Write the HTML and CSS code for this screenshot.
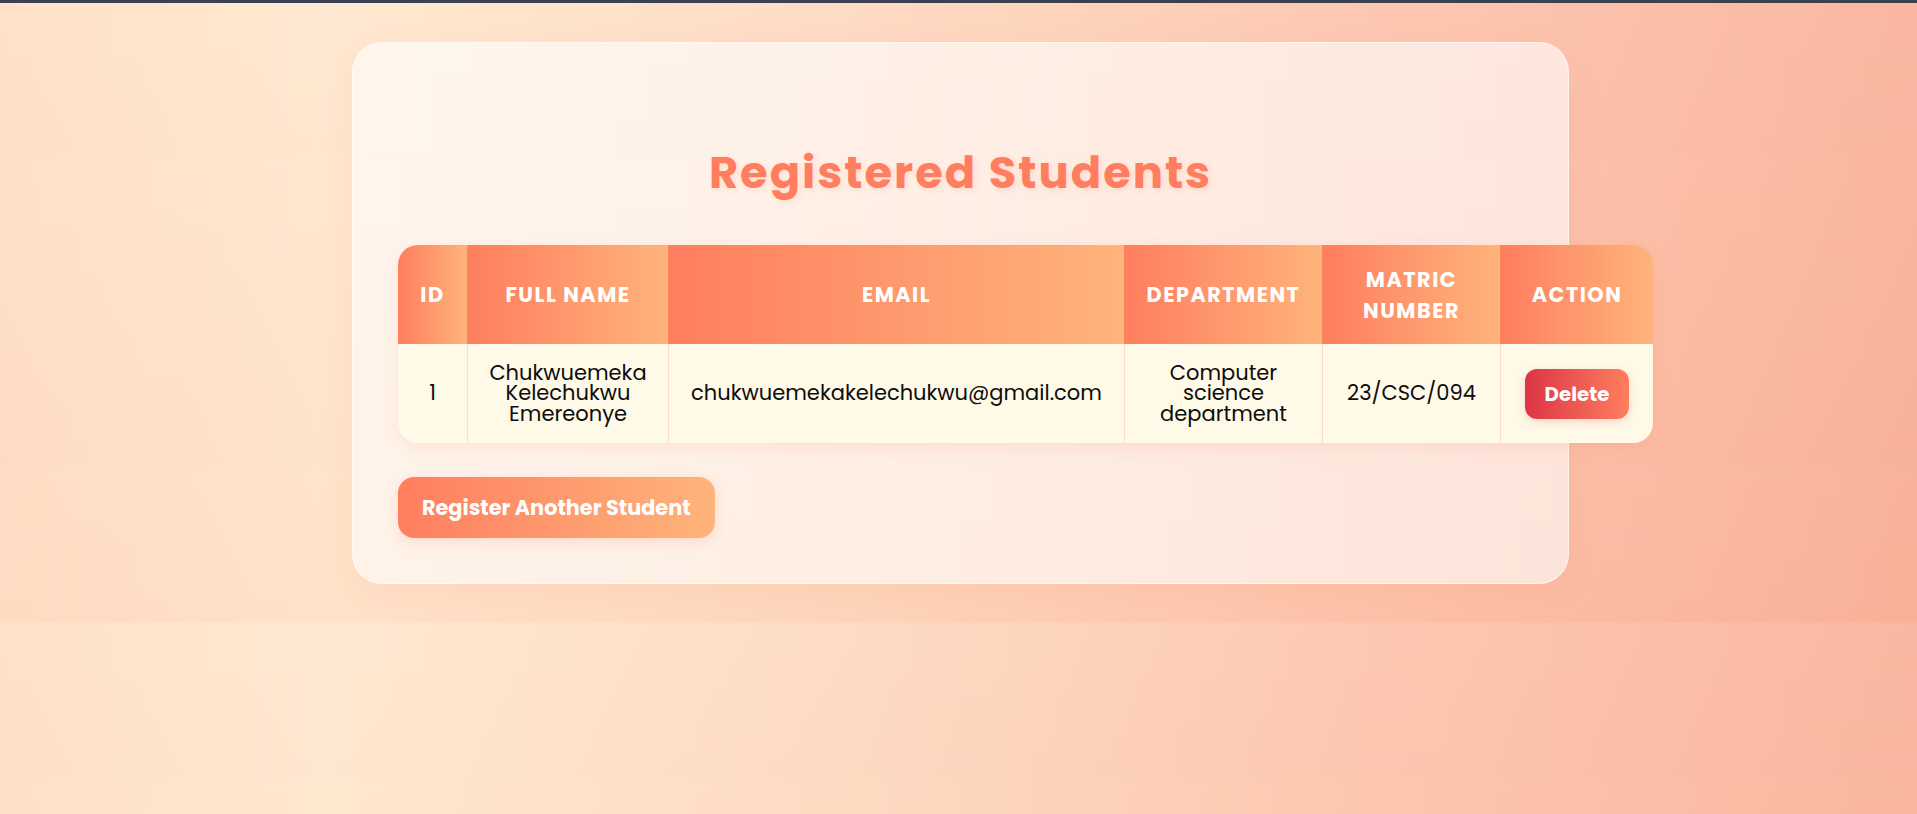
FILE: index.html
```html
<!DOCTYPE html>
<html lang="en">
<head>
<meta charset="utf-8">
<title>Registered Students</title>
<link rel="stylesheet" href="styles.css">
</head>
<body>
<div class="topbar"></div>
<main class="page">
  <section class="card">
    <h1 class="title">Registered Students</h1>
    <div class="table-wrap">
      <table class="students">
        <colgroup>
          <col class="c-id">
          <col class="c-name">
          <col class="c-email">
          <col class="c-dept">
          <col class="c-matric">
          <col class="c-action">
        </colgroup>
        <thead>
          <tr>
            <th>ID</th>
            <th>Full Name</th>
            <th>Email</th>
            <th>Department</th>
            <th>Matric Number</th>
            <th>Action</th>
          </tr>
        </thead>
        <tbody>
          <tr>
            <td>1</td>
            <td>Chukwuemeka Kelechukwu Emereonye</td>
            <td>chukwuemekakelechukwu@gmail.com</td>
            <td>Computer science department</td>
            <td>23/CSC/094</td>
            <td><button class="btn-delete" type="button">Delete</button></td>
          </tr>
        </tbody>
      </table>
    </div>
    <div class="actions">
      <a class="btn-register" href="#">Register Another Student</a>
    </div>
  </section>
</main>
</body>
</html>
```

FILE: styles.css
```css
html {
  background:
    linear-gradient(to bottom, rgba(255,255,255,0.06), rgba(235,130,90,0.05)),
    linear-gradient(90deg, #ffdfc7 0%, #ffe8cf 17%, #fed9c0 45%, #fdc6ae 70%, #fab39b 100%);
}

body {
  margin: 0;
  font-family: Poppins, "DejaVu Sans", sans-serif;
  color: #0d0d0d;
}

.topbar {
  height: 3px;
  background: #3b4150;
}

.page {
  padding: 39px 0 39px 4px;
}

.card {
  box-sizing: border-box;
  width: 1217px;
  margin: 0 auto;
  padding: 45px;
  border: 1px solid rgba(255, 255, 255, 0.55);
  border-radius: 30px;
  background: rgba(255, 255, 255, 0.6);
  box-shadow: 0 8px 32px rgba(255, 126, 95, 0.10);
}

.title {
  margin: 55px 0 42px;
  font-size: 44.8px;
  line-height: 60px;
  font-weight: 700;
  letter-spacing: 2px;
  text-align: center;
  color: #ff7e5f;
  text-shadow: 2px 2px 6px rgba(255, 126, 95, 0.18);
}

.table-wrap {
  width: 1255px;
  border-radius: 20px;
  overflow: hidden;
  box-shadow: 0 4px 16px rgba(255, 126, 95, 0.14);
}

.students {
  width: 1255px;
  table-layout: fixed;
  border-collapse: separate;
  border-spacing: 0;
}

.c-id { width: 70px; }
.c-name { width: 201px; }
.c-email { width: 456px; }
.c-dept { width: 198px; }
.c-matric { width: 178px; }
.c-action { width: 152px; }

.students thead tr,
.students tbody tr {
  height: 99px;
}

.students th {
  padding: 0 8px;
  background: linear-gradient(90deg, #ff7e5f, #feb47b);
  color: #fff;
  font-size: 20.8px;
  line-height: 31px;
  font-weight: 700;
  letter-spacing: 1.5px;
  text-transform: uppercase;
  text-align: center;
  vertical-align: middle;
  border-right: 1px solid rgba(255, 140, 100, 0.5);
}

.students td {
  padding: 0 18px;
  background: #fff9e7;
  font-size: 21px;
  line-height: 20.6px;
  text-align: center;
  vertical-align: middle;
  border-right: 1px solid #fbdcc8;
}

.students th:last-child,
.students td:last-child {
  border-right: none;
}

.btn-delete {
  padding: 10px 20px;
  border: none;
  border-radius: 12px;
  background: linear-gradient(90deg, #dc3545, #ff7e5f);
  color: #fff;
  font-family: inherit;
  font-size: 19.8px;
  line-height: 30px;
  font-weight: 700;
  box-shadow: 0 3px 10px rgba(220, 53, 69, 0.18);
  cursor: pointer;
}

.actions {
  display: flex;
  margin-top: 34px;
}

.btn-register {
  display: block;
  padding: 15.5px 24px;
  border-radius: 16px;
  background: linear-gradient(90deg, #ff7e5f, #feb47b);
  color: #fff;
  font-size: 20.8px;
  line-height: 30px;
  font-weight: 700;
  text-decoration: none;
  box-shadow: 0 4px 15px rgba(255, 126, 95, 0.2);
}
```
